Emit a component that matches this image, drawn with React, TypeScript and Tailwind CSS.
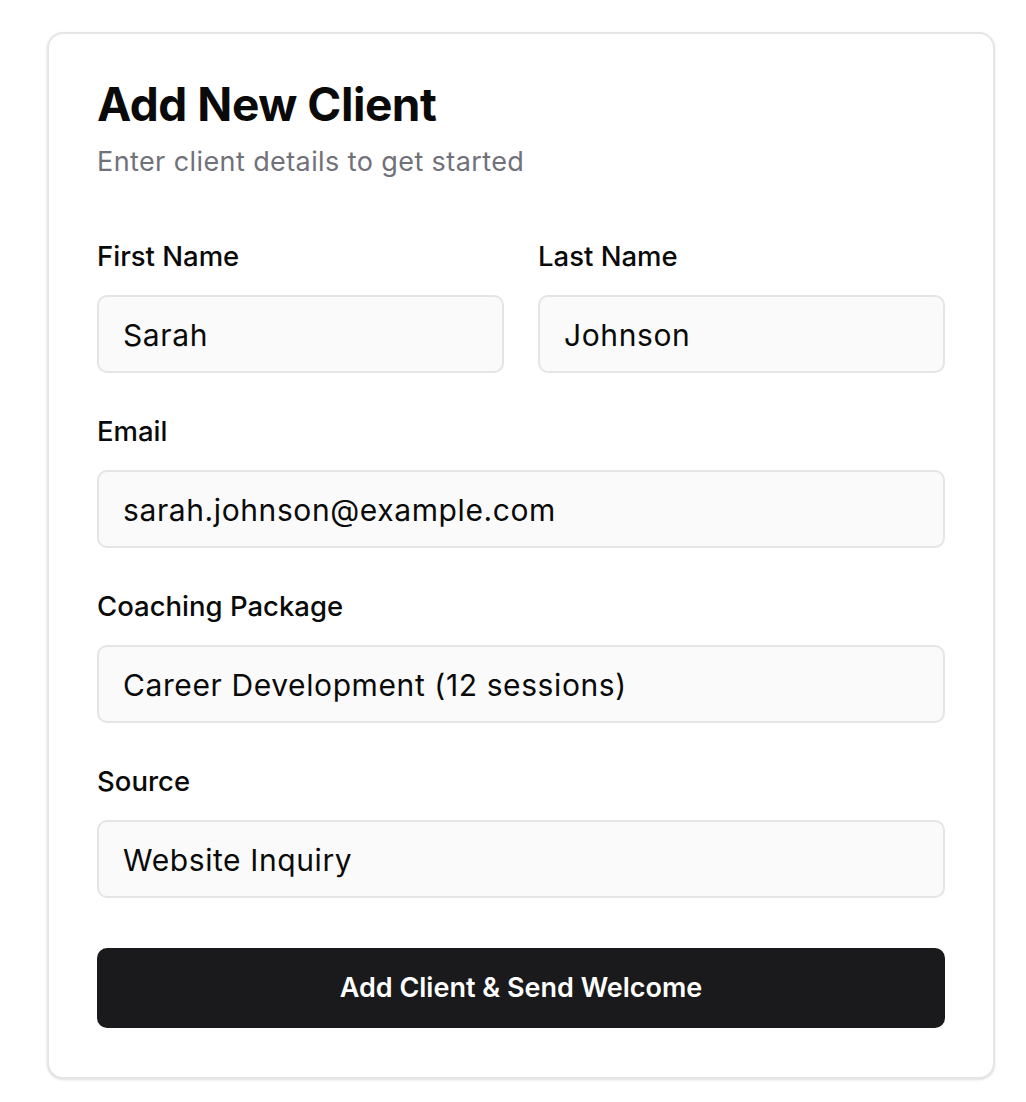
export default function App() {
  const fields = [
    { label: "Email", value: "sarah.johnson@example.com" },
    { label: "Coaching Package", value: "Career Development (12 sessions)" },
    { label: "Source", value: "Website Inquiry" },
  ]

  return (
    <div className="min-h-[1102px] bg-white pt-[32px] pl-[47px]" style={{ fontFamily: "Inter, 'Noto Sans', sans-serif" }}>
      <div className="w-[948px] rounded-[16px] border-2 border-[#e5e5e5] bg-white px-[48px] pt-[42px] pb-[49px] shadow-sm">
        <h2 className="text-[46px] font-bold leading-[56px] tracking-[-0.01em] text-[#0a0a0a]">Add New Client</h2>
        <p className="mt-[14px] text-[27px] leading-[32px] tracking-[0.015em] text-[#71717a]">Enter client details to get started</p>

        <div className="mt-[62px] grid grid-cols-2 gap-[34px]">
          <Field label="First Name" value="Sarah" />
          <Field label="Last Name" value="Johnson" />
        </div>

        {fields.map((f) => (
          <div key={f.label} className="mt-[42px]">
            <Field label={f.label} value={f.value} />
          </div>
        ))}

        <button className="mt-[50px] flex h-[80px] w-full items-center justify-center rounded-[10px] bg-[#1a1a1c] text-[27px] font-semibold text-white">
          Add Client &amp; Send Welcome
        </button>
      </div>
    </div>
  )
}

function Field({ label, value }: { label: string; value: string }) {
  return (
    <div className="flex flex-col">
      <label className="text-[27.5px] font-medium leading-[32px] text-[#0a0a0a]">{label}</label>
      <div className="mt-[23px] flex h-[78px] items-center rounded-[10px] border-2 border-[#e5e5e5] bg-[#fafafa] px-[24px] pt-[2px] text-[30px] tracking-[0.02em] text-[#0a0a0a]">
        {value}
      </div>
    </div>
  )
}
